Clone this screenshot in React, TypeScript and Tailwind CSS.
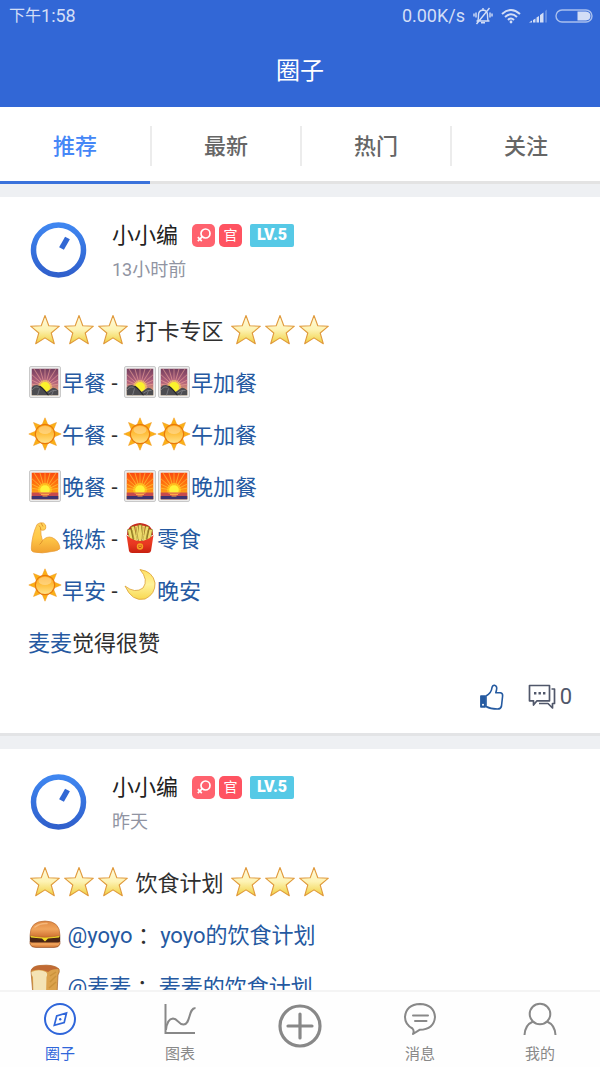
import type { ReactNode } from "react";
import { clsx } from "clsx";

type EmojiName = "star" | "dawn" | "sun" | "sunset" | "muscle" | "fries" | "moon" | "burger" | "bread";

type Part = { emoji: EmojiName } | { text: string } | { link: string };

type Line = { raised?: boolean; parts: Part[] };

type Post = { id: number; time: string; lines: Line[] };

const e = (emoji: EmojiName): Part => ({ emoji });
const t = (text: string): Part => ({ text });
const a = (link: string): Part => ({ link });

const tabs = ["推荐", "最新", "热门", "关注"];

const posts: Post[] = [
  {
    id: 1,
    time: "13小时前",
    lines: [
      { parts: [e("star"), e("star"), e("star"), t(" 打卡专区 "), e("star"), e("star"), e("star")] },
      { parts: [e("dawn"), a("早餐"), t(" - "), e("dawn"), e("dawn"), a("早加餐")] },
      { parts: [e("sun"), a("午餐"), t(" - "), e("sun"), e("sun"), a("午加餐")] },
      { parts: [e("sunset"), a("晚餐"), t(" - "), e("sunset"), e("sunset"), a("晚加餐")] },
      { parts: [e("muscle"), a("锻炼"), t(" - "), e("fries"), a("零食")] },
      { raised: true, parts: [e("sun"), a("早安"), t(" - "), e("moon"), a("晚安")] },
      { parts: [a("麦麦"), t("觉得很赞")] },
    ],
  },
  {
    id: 2,
    time: "昨天",
    lines: [
      { parts: [e("star"), e("star"), e("star"), t(" 饮食计划 "), e("star"), e("star"), e("star")] },
      { parts: [e("burger"), t(" "), a("@yoyo"), t(" ："), a("yoyo的饮食计划")] },
      { raised: true, parts: [e("bread"), t(" "), a("@麦麦"), t(" ："), a("麦麦的饮食计划")] },
    ],
  },
];

/* Gradients shared by the avatar and the emoji */
function Gradients() {
  const stops: [string, string, string, string][] = [
    ["g-ring", "#3f86f0", "#3672de", "#3060cc"],
    ["g-star", "#fffbe0", "#fdf3b4", "#f0d040"],
    ["g-sun", "#ffa818", "#ffc040", "#ffe48c"],
    ["g-dawn", "#74405f", "#b0607c", "#f5c070"],
    ["g-sunset", "#fb4a10", "#ff7c10", "#ffc81c"],
    ["g-skin", "#ffd45c", "#ffc848", "#f0a030"],
    ["g-fries", "#f0402c", "#e83820", "#c82010"],
    ["g-moon", "#ffe060", "#fff29a", "#f8d850"],
    ["g-bun", "#e08a44", "#f0a45c", "#cf7030"],
  ];
  return (
    <svg className="absolute size-0" aria-hidden="true">
      <defs>
        {stops.map(([id, from, mid, to]) => (
          <linearGradient key={id} id={id} x1="0" y1="0" x2="0" y2="1">
            <stop offset="0" stopColor={from} />
            <stop offset="0.5" stopColor={mid} />
            <stop offset="1" stopColor={to} />
          </linearGradient>
        ))}
      </defs>
    </svg>
  );
}

const star = "M17 2.5 L20.8 12.8 L31.4 13.2 L23.2 20 L26.3 30.7 L17 24.9 L7.7 30.7 L10.8 20 L2.6 13.2 L13.2 12.8 Z";

const rays = [-80, -64, -48, -32, -16, 0, 16, 32, 48, 64, 80];

const emojis: Record<EmojiName, ReactNode> = {
  star: <path d={star} fill="url(#g-star)" stroke="#e09a3c" strokeWidth="1.1" strokeLinejoin="round" />,
  dawn: (
    <>
      <rect x="1.5" y="1.5" width="31" height="31" rx="1.5" fill="#ececec" stroke="#c9c9c9" />
      <svg x="3.5" y="3.5" width="27" height="27" viewBox="0 0 27 27">
        <rect width="27" height="27" fill="url(#g-dawn)" />
        <g stroke="#f2a89a" strokeWidth="0.9" opacity="0.6">
          {rays.map((r) => (
            <path key={r} d="M13.5 18 V-8" transform={`rotate(${r} 13.5 18)`} />
          ))}
        </g>
        <circle cx="13.5" cy="18.5" r="7" fill="#ffd35a" opacity="0.6" />
        <circle cx="13.5" cy="18.5" r="5" fill="#fbf22c" />
        <path d="M0 19 Q4 15 8 17.5 Q11 19 15 23.5 Q17 22 20 20 Q23 18 27 22 V27 H0 Z" fill="#4c4c50" />
        <path d="M0 22 Q4 17 7 19 M6 27 L8 20 M17 24.5 Q21 21 25 22 M20 27 L22 22" stroke="#85858a" strokeWidth="0.8" fill="none" />
        <path d="M8 17.5 Q12 20 17 27" stroke="#25252a" strokeWidth="1.2" fill="none" />
      </svg>
    </>
  ),
  sun: (
    <>
      <g fill="#fbb116" stroke="#f09414" strokeWidth="0.5">
        {[0, 45, 90, 135, 180, 225, 270, 315].map((r) => (
          <path key={r} d="M17 0.8 L20 8 H14 Z" transform={`rotate(${r} 17 17)`} />
        ))}
      </g>
      <circle cx="17" cy="17" r="9.7" fill="url(#g-sun)" stroke="#e8780c" strokeWidth="1.2" />
      <ellipse cx="17" cy="13" rx="6.5" ry="4" fill="#fff" opacity="0.3" />
    </>
  ),
  sunset: (
    <>
      <rect x="1.5" y="1.5" width="31" height="31" rx="1.5" fill="#ececec" stroke="#c9c9c9" />
      <svg x="3.5" y="3.5" width="27" height="27" viewBox="0 0 27 27">
        <rect width="27" height="27" fill="url(#g-sunset)" />
        <g stroke="#ffd040" strokeWidth="0.9" opacity="0.6">
          {rays.map((r) => (
            <path key={r} d="M13.5 18 V-8" transform={`rotate(${r} 13.5 18)`} />
          ))}
        </g>
        <circle cx="13.5" cy="17.5" r="7" fill="#ffd820" opacity="0.6" />
        <circle cx="13.5" cy="17.5" r="4.8" fill="#fff338" />
        <rect y="20" width="27" height="7" fill="#c84a4c" />
        <rect y="23.5" width="27" height="3.5" fill="#3e3470" />
        <path d="M8 20.5 H19 M9.5 22 H17.5 M11 23.5 H16" stroke="#ffa844" strokeWidth="1" />
      </svg>
    </>
  ),
  muscle: (
    <>
      <path
        d="M9 3.5 Q12 0.8 15.5 2 Q18.5 3.5 17.8 7 Q17.5 9.3 14.5 9.3 L12.8 9 Q12.5 14 14.5 19.5 Q19 14.8 24 16.5 Q31 19.5 32 27.5 Q30 30 24 30.5 Q14 33 5.5 31 Q3 30.5 3.3 27 Q4 14 9 3.5 Z"
        fill="url(#g-skin)"
        stroke="#e89c38"
        strokeWidth="0.7"
      />
      <path d="M14.5 19.5 Q13.5 22 11.5 23.5 M11 4.5 Q13 6 12.8 9 M13 2 L15 5.5" stroke="#d98c28" strokeWidth="0.9" fill="none" />
    </>
  ),
  fries: (
    <>
      <path d="M4 14 Q4 3 17 2 Q30 3 30 14 Z" fill="#c8281c" />
      <g stroke="#8f7a24" strokeWidth="4" strokeLinecap="square">
        <path d="M8 17 L6.5 10 M12.5 19 L10 7 M17 19 V5.5 M21.5 19 L24 7 M26 17 L27.5 10" />
      </g>
      <g stroke="#eedb6c" strokeWidth="2.6" strokeLinecap="square">
        <path d="M8 17 L6.5 10 M12.5 19 L10 7 M17 19 V5.5 M21.5 19 L24 7 M26 17 L27.5 10 M13.5 6 L15 17 M20.5 6 L19 17" />
      </g>
      <path d="M13 6 L15 18 M20 6 L19 18 M9 9 L11 18 M25 9 L23 18" stroke="#a48d30" strokeWidth="0.7" />
      <path d="M3.5 14 Q10 20 17 20 Q24 20 30.5 14 L28 30 Q27.5 32 25 32 H9 Q6.5 32 6 30 Z" fill="url(#g-fries)" />
      <circle cx="17" cy="25.5" r="3.2" fill="#f5a020" />
      <path d="M15.5 26 Q17 28 18.5 26 M16 24.5 V24.6 M18 24.5 V24.6" stroke="#c83a18" strokeWidth="0.9" strokeLinecap="round" fill="none" />
    </>
  ),
  moon: (
    <path
      d="M17 1.5 Q30 3.5 32 15 Q32.5 26 22 31 Q9 34 2 18 Q12 26 20 20 Q26 12 17 1.5 Z"
      fill="url(#g-moon)"
      stroke="#e0a840"
      strokeWidth="0.9"
      strokeLinejoin="round"
    />
  ),
  burger: (
    <>
      <path d="M2 24 H32 V27 Q31 30.5 26 30.5 H8 Q3 30.5 2 27 Z" fill="url(#g-bun)" stroke="#8a4820" strokeWidth="0.6" />
      <path d="M1.8 18.5 Q17 22 32.2 18.5 V23.5 Q32 25.5 29 25.5 H5 Q2 25.5 1.8 23.5 Z" fill="#4a2414" />
      <path d="M2 18.5 H32 L31 20.5 L20 21.5 L17 24.5 L14 21.5 L3 20.5 Z" fill="#f3dc28" />
      <path d="M2 18.5 Q2 4 17 4 Q32 4 32 18.5 Q17 22 2 18.5 Z" fill="url(#g-bun)" stroke="#b0622c" strokeWidth="0.6" />
      <path d="M7 10 Q12 6 19 6.5" stroke="#ffd09a" strokeWidth="1.5" opacity="0.6" strokeLinecap="round" fill="none" />
    </>
  ),
  bread: (
    <>
      <path d="M3 7 Q4 2 12 1.5 Q26 0 31 5 Q32 8 30 11 L29 31 L19 33 L5 32 Z" fill="#dba24c" stroke="#a8642c" strokeWidth="0.7" />
      <path d="M3 7 Q4 2 12 1.5 Q26 0 31 5 Q24 4.5 20 8 Q12 4 3 7 Z" fill="#c06a34" />
      <path d="M3.5 8 Q11 4.5 18 8 Q20 10 18.5 13 L18 32.5 L5.5 31.5 L5 13 Q3 11 3.5 8 Z" fill="#f4e3b4" />
      <path d="M22 12 L28 8 M22 18 L28 12 M21 24 L28 18" stroke="#c08830" strokeWidth="1.5" opacity="0.6" />
    </>
  ),
};

function Emoji({ name, raised }: { name: EmojiName; raised?: boolean }) {
  return (
    <svg viewBox="0 0 34 34" className={clsx("size-[34px] shrink-0", raised ? "mt-1 self-start" : "self-center")} aria-hidden="true">
      {emojis[name]}
    </svg>
  );
}

function Avatar() {
  return (
    <svg viewBox="0 0 60 60" className="size-[60px] shrink-0" aria-hidden="true">
      <circle cx="30.5" cy="30" r="25" fill="none" stroke="url(#g-ring)" strokeWidth="5.5" />
      <path d="M33.5 28.5 L39.5 18" stroke="#3268d4" strokeWidth="5.5" />
    </svg>
  );
}

function StatusBar() {
  return (
    <div className="flex h-8 items-center pr-[7px] pl-[9px] text-[#d3def6]">
      <span className="flex items-center text-lg">
        <span className="text-base">下午</span>1:58
      </span>
      <span className="ml-auto text-lg">0.00K/s</span>
      <svg viewBox="0 0 20 18" className="ml-2 h-[18px] w-5" fill="none" stroke="currentColor" strokeWidth="1.4">
        <path d="M3.5 14 H16.5 M5 13.5 Q5.5 11 5.5 8 Q5.5 3.5 10 3 Q14.5 3.5 14.5 8 Q14.5 11 15 13.5 M8 15.8 H12 M10 3 V1 M3.5 17 L16.5 1" />
        <path d="M3 5.5 V10.5 M1 6.5 V9.5 M17 5.5 V10.5 M19 6.5 V9.5" />
      </svg>
      <svg viewBox="0 0 20 16" className="ml-2 h-4 w-5" fill="none" stroke="currentColor" strokeWidth="2">
        <path d="M1 6 Q10 -2 19 6 M4 9 Q10 3.5 16 9 M7 12 Q10 9 13 12" />
        <circle cx="10" cy="14" r="1.4" fill="currentColor" stroke="none" />
      </svg>
      <svg viewBox="0 0 18 14" className="ml-2 h-[14px] w-[18px]" fill="currentColor">
        <path d="M0 13.5 L3 11.5 V13.5 Z M4 11 L6.5 9.5 V13.5 H4 Z M7.500 8.500 L10 7 V13.5 H7.500 Z M11 6 L14.500 3.500 V13.5 H11 Z" />
        <path d="M16 2 L18 0.5 V13.5 H16 Z" opacity="0.3" />
      </svg>
      <svg viewBox="0 0 38 14" className="ml-2 h-[14px] w-[38px]">
        <rect x="1" y="1" width="36" height="12" rx="6" fill="none" stroke="#a9c0ee" strokeWidth="1.4" />
        <path d="M22.5 2.5 H31 Q35.5 3 35.5 7 Q35.5 11 31 11.5 H22.5 Z" fill="currentColor" />
      </svg>
    </div>
  );
}

function TabBar() {
  return (
    <nav className="flex bg-white">
      {tabs.map((tab, i) => (
        <button
          key={tab}
          type="button"
          className={clsx(
            "flex h-[77px] flex-1 items-center border-b-[3px] pt-1 text-[22px] font-medium",
            i === 0 ? "border-[#3a72db] text-[#4587f7]" : "border-[#e3e3e3] text-[#666]",
          )}
        >
          <span className={clsx("flex h-10 flex-1 items-center justify-center", i > 0 && "border-l-2 border-[#ececec]")}>
            {tab}
          </span>
        </button>
      ))}
    </nav>
  );
}

function Badges() {
  return (
    <span className="ml-[14px] flex items-center text-white">
      <span className="flex size-[23px] items-center justify-center rounded-[5px] bg-[#ff626e]">
        <svg viewBox="0 0 16 16" className="size-4" fill="none" stroke="currentColor" strokeWidth="1.7">
          <circle cx="9.5" cy="6.5" r="4.5" />
          <path d="M6.3 9.7 L1.8 14.2 M1.8 10.2 L5.8 14.2" />
        </svg>
      </span>
      <span className="ml-1 flex size-[23px] items-center justify-center rounded-[5px] bg-[#ff5361] text-sm">官</span>
      <span className="ml-2 flex h-[23px] w-11 items-center justify-center rounded-[2px] bg-[#56c9e6] text-base font-black">LV.5</span>
    </span>
  );
}

function ThumbIcon() {
  return (
    <svg viewBox="0 0 24 26" className="h-[26px] w-6" fill="none" stroke="#255aa0" strokeWidth="1.6" strokeLinejoin="round">
      <path d="M6 12 Q11.5 9 12 3.500 Q12.500 1 14.500 1.200 Q17.500 2 16.500 6 L15.800 8.800 H20.500 Q23 9.500 22.600 12 L21.500 22 Q21 25 17.500 25 Q10.500 25 6 22.500 Z" />
      <path d="M0.9 12 H5 V23 H0.9 Z" fill="#255aa0" />
      <circle cx="3" cy="20.8" r="1" fill="#fff" stroke="none" />
    </svg>
  );
}

function CommentIcon() {
  return (
    <svg viewBox="0 0 28 26" className="h-[26px] w-7" fill="none" stroke="#50576a" strokeWidth="1.7" strokeLinejoin="round">
      <path d="M1.5 1.5 H21.5 V16.8 H9 L5.5 21 V16.8 H1.5 Z" />
      <path d="M23.5 5 H26.5 V19.5 H24.5 V24 L20 19.5 H11" />
      <path d="M6 9.3 H8.4 M10.5 9.3 H12.9 M15 9.3 H17.4" strokeWidth="2.4" />
    </svg>
  );
}

function PostCard({ post }: { post: Post }) {
  return (
    <article className="border-b-[3px] border-[#e3e4e6] bg-white px-7 pb-2">
      <header className="flex h-[107px] pt-[23px]">
        <Avatar />
        <div className="ml-6">
          <div className="flex h-[30px] items-center">
            <span className="text-[22px] text-[#222]">小小编</span>
            <Badges />
          </div>
          <time className="block text-lg leading-10 text-[#9094a2]">{post.time}</time>
        </div>
      </header>

      {post.lines.map((line, i) => (
        <p key={i} className="flex h-[52px] text-[22px] leading-[55px] whitespace-pre text-[#2f2f2f]">
          {line.parts.map((part, j) => {
            if ("emoji" in part) return <Emoji key={j} name={part.emoji} raised={line.raised} />;
            if ("link" in part)
              return (
                <a key={j} href="#" className="text-[#2559a1]">
                  {part.link}
                </a>
              );
            return <span key={j}>{part.text}</span>;
          })}
        </p>
      ))}

      <div className="flex h-[57px] items-center justify-end gap-6">
        <button type="button" aria-label="赞">
          <ThumbIcon />
        </button>
        <button type="button" className="flex items-center gap-1 text-[22px] text-[#50576a]">
          <CommentIcon />0
        </button>
      </div>
    </article>
  );
}

function NavItem({ label, active, children }: { label: string; active?: boolean; children: ReactNode }) {
  return (
    <a href="#" className={clsx("flex flex-1 flex-col items-center pt-[10px]", active ? "text-[#2f66da]" : "text-[#888]")}>
      <svg viewBox="0 0 34 34" className="size-[34px]" fill="none" stroke="currentColor" strokeWidth="2" aria-hidden="true">
        {children}
      </svg>
      <span className="mt-[6px] text-[15px] leading-6">{label}</span>
    </a>
  );
}

function BottomNav() {
  return (
    <nav className="flex h-[77px] shrink-0 border-t-2 border-[#f4f4f4] bg-[#fefefe]">
      <NavItem label="圈子" active>
        <circle cx="17" cy="17" r="15" />
        <path d="M11.3 23.3 L13.7 14 L23.5 11 L21.2 20.5 Z" strokeWidth="1.7" />
        <circle cx="17.2" cy="17.2" r="1.2" fill="currentColor" stroke="none" />
      </NavItem>
      <NavItem label="图表">
        <path d="M2.5 2 V31 H32" />
        <path d="M3 28 Q4 17 10 16.5 C15 16.5 15 22.5 20.5 22.5 C28 22.5 25 6 32.5 6" />
      </NavItem>
      <button type="button" aria-label="发布" className="flex flex-1 justify-center pt-3 text-[#888]">
        <svg viewBox="0 0 44 44" className="size-11" fill="none" stroke="currentColor" strokeWidth="3.2" strokeLinecap="round">
          <circle cx="22" cy="22" r="20" />
          <path d="M22 10 V34 M10 22 H34" />
        </svg>
      </button>
      <NavItem label="消息">
        <path d="M9.5 26.5 Q2 22.5 2 15 Q3 2.5 17 2 Q31 2.5 32 15 Q31 27.5 16.5 27.8 L10 32 Q11.5 29 9.5 26.5 Z" strokeLinejoin="round" />
        <path d="M10 13.5 H25 M12 19 H23.5" strokeLinecap="round" />
      </NavItem>
      <NavItem label="我的">
        <circle cx="17" cy="12" r="10.3" />
        <path d="M1.5 33 Q2 23 10 19.5 M32.5 33 Q32 23 24 19.5" />
      </NavItem>
    </nav>
  );
}

export default function App() {
  return (
    <div className="flex h-screen flex-col bg-[#eef0f3] font-[Roboto,'Noto_Sans_CJK_SC',sans-serif]">
      <Gradients />
      <header className="h-[107px] shrink-0 bg-[#3267d6]">
        <StatusBar />
        <h1 className="text-center text-2xl leading-[78px] text-white">圈子</h1>
      </header>
      <main className="min-h-0 flex-1 overflow-y-auto [scrollbar-width:none]">
        <TabBar />
        <div className="mt-[13px] flex flex-col gap-[13px]">
          {posts.map((post) => (
            <PostCard key={post.id} post={post} />
          ))}
        </div>
      </main>
      <BottomNav />
    </div>
  );
}
